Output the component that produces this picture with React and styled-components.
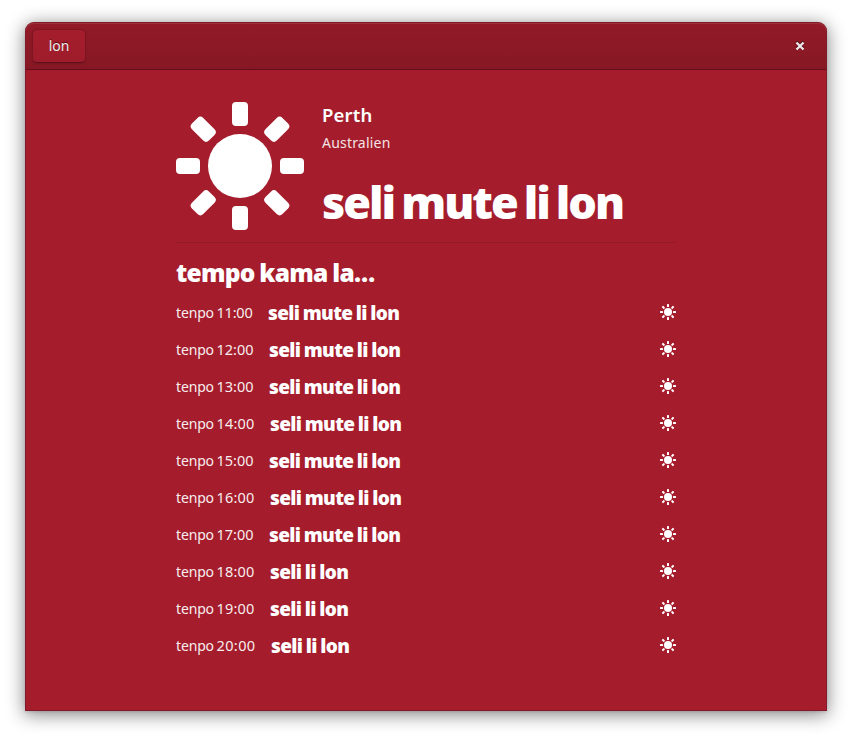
import React from "react";
import styled, { createGlobalStyle } from "styled-components";

const GlobalStyle = createGlobalStyle`
  * { box-sizing: border-box; }
  body {
    margin: 0;
    background: #fff;
    font-family: "Noto Sans", "Open Sans", sans-serif;
    color: #fff;
  }
`;

const Desktop = styled.div`
  width: 852px;
  height: 739px;
  padding: 22px 25px 28px;
  overflow: hidden;
`;

const Window = styled.main`
  display: flex;
  flex-direction: column;
  height: 689px;
  border: 1px solid #84192b;
  border-top-color: #7f1a27;
  border-radius: 9px 9px 0 0;
  background: #a51d2d;
  box-shadow: 0 3px 18px 1px rgba(0, 0, 0, 0.46), 0 1px 3px rgba(0, 0, 0, 0.12);
`;

const HeaderBar = styled.header`
  display: flex;
  align-items: center;
  justify-content: space-between;
  flex: none;
  height: 47px;
  padding: 0 18px 0 6px;
  border-bottom: 1px solid #630d18;
  border-radius: 8px 8px 0 0;
  background: linear-gradient(to top, #861824, #931a28);
  box-shadow: inset 0 1px #9c303d;
`;

const HeaderButton = styled.button`
  width: 54px;
  height: 34px;
  padding: 0;
  border: 1px solid #7c1521;
  border-bottom-color: #5d101a;
  border-radius: 5px;
  background: linear-gradient(to top, #9e1c2b, #a51d2d);
  box-shadow: 0 1px 2px rgba(0, 0, 0, 0.12);
  color: #eeeeec;
  font: 400 14px/20px "Noto Sans", sans-serif;
  text-shadow: 0 -1px rgba(0, 0, 0, 0.5);
`;

const CloseButton = styled.button`
  display: flex;
  padding: 0;
  border: 0;
  background: none;
`;

const Content = styled.section`
  width: 500px;
  margin: 32px auto 0;
`;

const Current = styled.div`
  display: flex;
  gap: 18px;
  height: 141px;
  border-bottom: 1px solid #941a28;
`;

const Summary = styled.div`
  display: flex;
  flex-direction: column;
  white-space: nowrap;
`;

const City = styled.h2`
  margin: 0;
  font-size: 18.5px;
  font-weight: 600;
  line-height: 25px;
  letter-spacing: 0.2px;
`;

const Country = styled.div`
  margin-top: 6px;
  font-size: 14px;
  line-height: 20px;
  letter-spacing: 0.2px;
  opacity: 0.88;
`;

const Condition = styled.h1`
  margin: 15px 0 0;
  font-size: 45px;
  font-weight: 900;
  line-height: 68px;
  letter-spacing: -2px;
  word-spacing: -2.8px;
`;

const ForecastTitle = styled.h3`
  margin: 13px 0 4px;
  font-size: 24.5px;
  font-weight: 900;
  line-height: 34px;
  letter-spacing: -0.75px;
  word-spacing: -0.8px;
  white-space: nowrap;
`;

const ForecastRow = styled.div`
  display: flex;
  align-items: center;
  height: 37px;
`;

const Time = styled.span`
  flex: none;
  width: ${(p) => p.$width}px;
  margin-right: 16px;
  font-size: 14px;
  line-height: 20px;
  letter-spacing: -0.15px;
  word-spacing: -1px;
  white-space: nowrap;
  opacity: 0.92;
`;

const Clock = styled.span`
  font-size: 14.5px;
  letter-spacing: ${(p) => (p.$width - 76.9) / 5}px;
`;

const Outlook = styled.strong`
  flex: 1;
  font-size: 19px;
  font-weight: 900;
  letter-spacing: -0.65px;
  word-spacing: -0.8px;
`;

const SmallSun = styled.svg`
  display: block;
  margin-top: -2px;
`;

const forecast = [
  ["11:00", 76, "seli mute li lon"],
  ["12:00", 77, "seli mute li lon"],
  ["13:00", 77, "seli mute li lon"],
  ["14:00", 78, "seli mute li lon"],
  ["15:00", 77, "seli mute li lon"],
  ["16:00", 78, "seli mute li lon"],
  ["17:00", 77, "seli mute li lon"],
  ["18:00", 78, "seli li lon"],
  ["19:00", 78, "seli li lon"],
  ["20:00", 79, "seli li lon"],
];

const angles = [0, 45, 90, 135, 180, 225, 270, 315];

function SunShapes() {
  return (
    <g fill="#fff">
      <circle cx="64" cy="64" r="32" />
      {angles.map((a) => (
        <rect key={a} x="56" y="0" width="16" height="24" rx="4" transform={`rotate(${a} 64 64)`} />
      ))}
    </g>
  );
}

export default function App() {
  return (
    <Desktop>
      <GlobalStyle />
      <Window>
        <HeaderBar>
          <HeaderButton>lon</HeaderButton>
          <CloseButton aria-label="Close">
            <svg width="16" height="16" viewBox="0 0 16 16" fill="none" strokeWidth="2.2">
              <path d="M4.5 3.5l7 7M11.5 3.5l-7 7" stroke="#46101a" />
              <path d="M4.5 4.5l7 7M11.5 4.5l-7 7" stroke="#eeeeec" />
            </svg>
          </CloseButton>
        </HeaderBar>
        <Content>
          <Current>
            <svg width="128" height="128" viewBox="0 0 128 128"><SunShapes /></svg>
            <Summary>
              <City>Perth</City>
              <Country>Australien</Country>
              <Condition>seli mute li lon</Condition>
            </Summary>
          </Current>
          <ForecastTitle>tempo kama la…</ForecastTitle>
          {forecast.map(([time, width, text]) => (
            <ForecastRow key={time}>
              <Time $width={width}>
                tenpo <Clock $width={width}>{time}</Clock>
              </Time>
              <Outlook>{text}</Outlook>
              <SmallSun width="16" height="16" viewBox="0 0 128 128"><SunShapes /></SmallSun>
            </ForecastRow>
          ))}
        </Content>
      </Window>
    </Desktop>
  );
}
